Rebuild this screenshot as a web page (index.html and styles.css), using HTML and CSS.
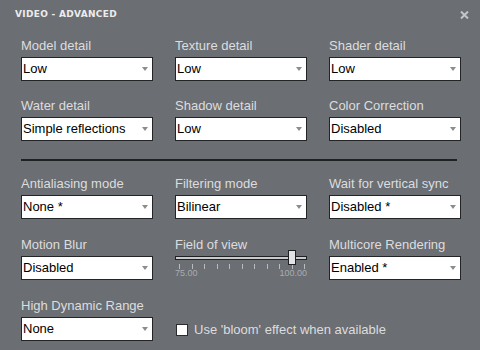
FILE: index.html
```html
<!DOCTYPE html>
<html lang="en">
<head>
  <meta charset="UTF-8">
  <title>Video - Advanced</title>
  <link rel="stylesheet" href="styles.css">
</head>
<body>
  <div class="window">
    <div class="header">
      <span class="title">VIDEO - ADVANCED</span>
      <svg class="close" width="9" height="8" viewBox="0 0 9 8">
        <path d="M1 0.5 L8 7.5 M8 0.5 L1 7.5" stroke="#c4c6c8" stroke-width="2"/>
      </svg>
    </div>

    <div class="section first">
      <div class="field">
        <div class="label">Model detail</div>
        <div class="select"><span>Low</span><i class="arrow"></i></div>
      </div>
      <div class="field">
        <div class="label">Texture detail</div>
        <div class="select"><span>Low</span><i class="arrow"></i></div>
      </div>
      <div class="field">
        <div class="label">Shader detail</div>
        <div class="select"><span>Low</span><i class="arrow"></i></div>
      </div>
      <div class="field">
        <div class="label">Water detail</div>
        <div class="select"><span>Simple reflections</span><i class="arrow"></i></div>
      </div>
      <div class="field">
        <div class="label">Shadow detail</div>
        <div class="select"><span>Low</span><i class="arrow"></i></div>
      </div>
      <div class="field">
        <div class="label">Color Correction</div>
        <div class="select"><span>Disabled</span><i class="arrow"></i></div>
      </div>
    </div>

    <div class="separator"></div>

    <div class="section second">
      <div class="field">
        <div class="label">Antialiasing mode</div>
        <div class="select"><span>None *</span><i class="arrow"></i></div>
      </div>
      <div class="field">
        <div class="label">Filtering mode</div>
        <div class="select"><span>Bilinear</span><i class="arrow"></i></div>
      </div>
      <div class="field">
        <div class="label">Wait for vertical sync</div>
        <div class="select"><span>Disabled *</span><i class="arrow"></i></div>
      </div>
      <div class="field">
        <div class="label">Motion Blur</div>
        <div class="select"><span>Disabled</span><i class="arrow"></i></div>
      </div>
      <div class="field">
        <div class="label">Field of view</div>
        <div class="slider">
          <div class="track">
            <div class="thumb"></div>
          </div>
          <div class="ticks">
            <i></i><i></i><i></i><i></i><i></i><i></i><i></i><i></i><i></i><i></i><i></i>
          </div>
          <div class="range">
            <span>75.00</span>
            <span>100.00</span>
          </div>
        </div>
      </div>
      <div class="field">
        <div class="label">Multicore Rendering</div>
        <div class="select"><span>Enabled *</span><i class="arrow"></i></div>
      </div>
      <div class="field">
        <div class="label">High Dynamic Range</div>
        <div class="select"><span>None</span><i class="arrow"></i></div>
      </div>
      <div class="field wide">
        <div class="label">&nbsp;</div>
        <div class="check">
          <span class="box"></span>
          <span>Use 'bloom' effect when available</span>
        </div>
      </div>
    </div>
  </div>
</body>
</html>
```

FILE: styles.css
```css
html, body {
  margin: 0;
  padding: 0;
}

body {
  background-color: #6b6e73;
  font-family: "Liberation Sans", Arial, sans-serif;
  font-size: 13px;
  color: #dcddde;
}

.window {
  width: 480px;
  height: 350px;
  overflow: hidden;
}

.header {
  display: flex;
  align-items: flex-start;
  justify-content: space-between;
  padding: 8px 11px 0 15px;
  height: 12px;
}

.title {
  font-family: "DejaVu Sans", Verdana, sans-serif;
  font-weight: bold;
  font-size: 9px;
  line-height: 12px;
  letter-spacing: 0.3px;
  color: #ececec;
}

.close {
  margin-top: 3px;
}

.section {
  display: grid;
  grid-template-columns: repeat(3, 132px);
  column-gap: 22px;
  padding-left: 21px;
}

.section.first {
  margin-top: 18px;
  row-gap: 17px;
}

.section.second {
  margin-top: 15px;
  row-gap: 18px;
}

.label {
  line-height: 16px;
  height: 16px;
  margin-bottom: 3px;
  white-space: nowrap;
}

.select {
  height: 22px;
  border: 1px solid #232425;
  background: #fff;
  color: #000;
  display: flex;
  align-items: center;
  padding: 0 4px 0 1px;
  line-height: 16px;
}

.select span {
  flex: 1;
  white-space: nowrap;
}

.arrow {
  width: 0;
  height: 0;
  border-left: 3px solid transparent;
  border-right: 3px solid transparent;
  border-top: 4px solid #8c8c8c;
}

.separator {
  height: 2px;
  background: #1f2022;
  margin: 18px 23px 0 21px;
}

.slider {
  height: 24px;
}

.track {
  position: relative;
  margin-top: 2px;
  height: 2px;
  border: 1px solid #1f2022;
  background: #c9cacc;
}

.thumb {
  position: absolute;
  left: 112px;
  top: -7px;
  width: 6px;
  height: 13px;
  border: 1px solid #1f2022;
  background: #e2e3e4;
}

.ticks {
  display: flex;
  justify-content: space-between;
  padding: 0 2px 0 4px;
  margin-top: 4px;
}

.ticks i {
  width: 1px;
  height: 5px;
  background: #b9bcbf;
}

.range {
  display: flex;
  justify-content: space-between;
  font-size: 9px;
  line-height: 10px;
  margin-top: -1px;
  color: #a9adb1;
}

.check {
  height: 24px;
  display: flex;
  align-items: center;
  white-space: nowrap;
}

.box {
  width: 10px;
  height: 10px;
  border: 1px solid #2a2b2c;
  background: #fff;
  margin: 1px 6px 0 1px;
}

.wide {
  grid-column: span 2;
}
```
